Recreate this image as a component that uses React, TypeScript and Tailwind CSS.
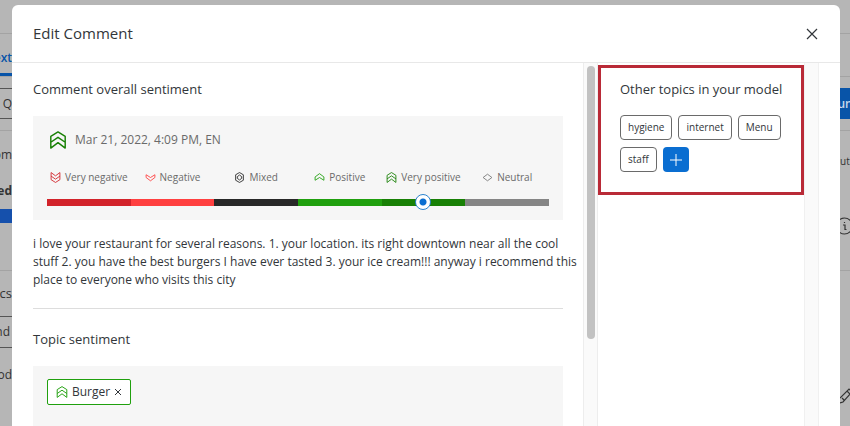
import { useState } from 'react';

type Sentiment = 'veryNegative' | 'negative' | 'mixed' | 'positive' | 'veryPositive' | 'neutral';

const LEVELS: { id: Sentiment; label: string; bar: string; icon: string }[] = [
  { id: 'veryNegative', label: 'Very negative', bar: 'bg-[#d2232a]', icon: 'text-[#d2232a]' },
  { id: 'negative', label: 'Negative', bar: 'bg-[#ff4040]', icon: 'text-[#ff4040]' },
  { id: 'mixed', label: 'Mixed', bar: 'bg-[#282828]', icon: 'text-[#282828]' },
  { id: 'positive', label: 'Positive', bar: 'bg-[#20a00e]', icon: 'text-[#20a00e]' },
  { id: 'veryPositive', label: 'Very positive', bar: 'bg-[#188005]', icon: 'text-[#188005]' },
  { id: 'neutral', label: 'Neutral', bar: 'bg-[#858585]', icon: 'text-[#777777]' },
];

const PATHS: Record<Sentiment, string> = {
  veryPositive: 'M2 19V6l8-5 8 5v13l-8-6-8 6zM2 12.500l8-5.500 8 5.500',
  veryNegative: 'M2 1v13l8 5 8-5V1l-8 6-8-6zM2 7.500l8 5.500 8-5.500',
  positive: 'M2 15V9l8-6 8 6v6l-8-5-8 5z',
  negative: 'M2 5v5l8 6 8-6V5l-8 5-8-5z',
  mixed: 'M3 5l7-4 7 4v10l-7 4-7-4zM10 5.500l4 3v3l-4 3-4-3v-3z',
  neutral: 'M2 10l8-6 8 6-8 6z',
};

function SentimentIcon({ type, className = '' }: { type: Sentiment; className?: string }) {
  return (
    <svg viewBox="0 0 20 20" className={`shrink-0 ${className}`} fill="none" stroke="currentColor" strokeWidth="1.6" strokeLinejoin="round" aria-hidden="true">
      <path d={PATHS[type]} />
    </svg>
  );
}

function SentimentSlider({ label }: { label: string }) {
  const [value, setValue] = useState(4);
  return (
    <div>
      <div className="grid grid-cols-6">
        {LEVELS.map((level) => (
          <div key={level.id} className="flex items-center justify-center gap-1 whitespace-nowrap text-[10px] leading-4 text-[#6a6a6a]">
            <SentimentIcon type={level.id} className={`h-[11px] w-[11px] ${level.icon}`} />
            {level.label}
          </div>
        ))}
      </div>
      <div className="relative mt-3.5">
        <div className="grid h-[7px] grid-cols-6">
          {LEVELS.map((level) => (
            <div key={level.id} className={level.bar} />
          ))}
        </div>
        <input
          type="range"
          min={0}
          max={5}
          value={value}
          aria-label={label}
          onChange={(e) => setValue(Number(e.target.value))}
          className="absolute -top-[5px] left-[calc(8.333%-8px)] h-4 w-[calc(83.333%+16px)] appearance-none bg-transparent [&::-webkit-slider-thumb]:h-4 [&::-webkit-slider-thumb]:w-4 [&::-webkit-slider-thumb]:appearance-none [&::-webkit-slider-thumb]:rounded-full [&::-webkit-slider-thumb]:border [&::-webkit-slider-thumb]:border-[#2a83cf] [&::-webkit-slider-thumb]:bg-[radial-gradient(circle,#0a6ed1_3px,#fff_4px)]"
        />
      </div>
    </div>
  );
}

function PageBehind() {
  return (
    <div className="text-xs text-[#333]" aria-hidden="true">
      <div className="h-[34px] border-b border-[#a3a3a3]" />
      <div className="flex h-[43px] items-end border-b border-[#a3a3a3]">
        <div className="flex h-7 w-3 justify-end overflow-hidden border-b-[3px] border-[#0854a8] pt-0.5 font-semibold text-[#0854a8]">Text</div>
      </div>
      <div className="flex h-[54px] items-center justify-between border-b border-[#a3a3a3]">
        <div className="flex h-[31px] w-3 items-center justify-end border-y border-[#555]">Q</div>
        <div className="flex h-[31px] w-[10px] items-center justify-center overflow-hidden bg-[#0854a8] font-semibold text-[#c8d8ea]">un</div>
      </div>
      <div className="flex h-[78px] justify-between">
        <div className="flex w-3 flex-col items-end gap-5 overflow-hidden pt-4 leading-4">
          <span>Com</span>
          <span className="font-bold">ed</span>
        </div>
        <div className="w-[10px] overflow-hidden pt-[22px] text-[10px] leading-4">utral</div>
      </div>
      <div className="flex h-[62px] justify-between border-b border-[#a3a3a3]">
        <div className="h-[14px] w-3 bg-[#1550ac]" />
        <svg viewBox="0 0 10 18" className="mt-2 h-[18px] w-[10px]" fill="none" stroke="#333" strokeWidth="1.2">
          <circle cx="4.500" cy="9" r="8" />
          <path d="M3 8h2v4.500h1.500M4.500 5v1" />
        </svg>
      </div>
      <div className="flex justify-between">
        <div className="w-3">
          <div className="flex h-[45px] items-center justify-end overflow-hidden text-[13px]">Topics</div>
          <div className="flex h-8 items-center justify-end overflow-hidden border-y border-[#555] pr-0.5">nd</div>
          <div className="flex h-[54px] items-center justify-end overflow-hidden">Food</div>
        </div>
        <svg viewBox="0 0 10 16" className="mt-[117px] h-4 w-[10px]" fill="none" stroke="#333" strokeWidth="1.2">
          <path d="M0 15l3-1 9-10-3-3-9 9M7 3l3 3M2 10l2 2" />
        </svg>
      </div>
    </div>
  );
}

function CommentPane() {
  return (
    <section className="min-w-0 flex-1 overflow-hidden pt-4 pr-5 pl-[21px]">
      <h2 className="text-[13px] leading-5">Comment overall sentiment</h2>
      <div className="mt-[17px] bg-[#f6f6f6] px-3.5 pt-3 pb-3.5">
        <div className="mb-[17px] ml-0.5 flex items-center gap-2 text-xs leading-6 text-[#6a6a6a]">
          <SentimentIcon type="veryPositive" className="h-[18px] w-[18px] text-[#188005]" />
          Mar 21, 2022, 4:09 PM, EN
        </div>
        <SentimentSlider label="Comment overall sentiment" />
      </div>
      <p className="mt-[15px] -mr-[18px] text-xs leading-[18px]">
        i love your restaurant for several reasons. 1. your location. its right downtown near all the cool stuff 2. you
        have the best burgers I have ever tasted 3. your ice cream!!! anyway i recommend this place to everyone who
        visits this city
      </p>
      <hr className="mt-[19px] border-[#dddddd]" />
      <h2 className="mt-5 text-[13px] leading-5">Topic sentiment</h2>
      <div className="mt-[17px] bg-[#f6f6f6] px-3.5 pt-[13px] pb-3.5">
        <button type="button" className="mb-[18px] flex h-[26px] items-center gap-1 rounded-xs border border-[#20a00e] bg-white px-2 text-xs">
          <SentimentIcon type="veryPositive" className="h-3 w-3 text-[#20a00e]" />
          Burger
          <svg viewBox="0 0 8 8" className="h-2 w-2" stroke="currentColor" aria-label="Remove">
            <path d="M1 1l6 6M7 1L1 7" />
          </svg>
        </button>
        <SentimentSlider label="Burger sentiment" />
      </div>
    </section>
  );
}

function TopicsPane() {
  return (
    <section className="w-[206px] shrink-0 pt-0.5">
      <div className="h-[130px] border-[3px] border-[#b92a37] pt-[11px] pl-[19px]">
        <h2 className="text-[13px] leading-5 whitespace-nowrap">Other topics in your model</h2>
        <div className="mt-4 flex flex-wrap gap-x-1.5 gap-y-[7px]">
          {['hygiene', 'internet', 'Menu', 'staff'].map((topic) => (
            <button key={topic} type="button" className="h-[25px] rounded-sm border border-[#6a6a6a] px-[7px] text-[10px]">
              {topic}
            </button>
          ))}
          <button type="button" aria-label="Add topic" className="flex h-[25px] w-[26px] items-center justify-center rounded-sm bg-[#0a6ed1] text-white">
            <svg viewBox="0 0 12 12" className="h-3 w-3" stroke="currentColor">
              <path d="M6 0v12M0 6h12" />
            </svg>
          </button>
        </div>
      </div>
    </section>
  );
}

export default function App() {
  return (
    <main className="relative h-screen overflow-hidden bg-[#b6b6b6] font-['Open_Sans',sans-serif]">
      <PageBehind />
      <div role="dialog" aria-label="Edit Comment" className="absolute top-[5px] right-[10px] bottom-0 left-3 flex flex-col rounded-t-md bg-white text-[#32363a]">
        <header className="flex h-[58px] shrink-0 items-center justify-between border-b border-[#e8e8e8] pr-[22px] pl-[21px]">
          <h1 className="text-[15px]">Edit Comment</h1>
          <button type="button" aria-label="Close">
            <svg viewBox="0 0 12 12" className="h-3 w-3" stroke="currentColor" strokeWidth="1.2">
              <path d="M1 1l10 10M11 1L1 11" />
            </svg>
          </button>
        </header>
        <div className="flex min-h-0 flex-1 pr-[21px]">
          <CommentPane />
          <div className="w-[15px] shrink-0 border-x border-[#ededed] bg-[#fafafa] px-[3px] pt-[3px]">
            <div className="h-[273px] w-2 rounded-full bg-[#c2c2c2]" />
          </div>
          <TopicsPane />
          <div className="w-[15px] shrink-0 border-x border-[#f0f0f0] bg-[#fafafa]" />
        </div>
      </div>
    </main>
  );
}
